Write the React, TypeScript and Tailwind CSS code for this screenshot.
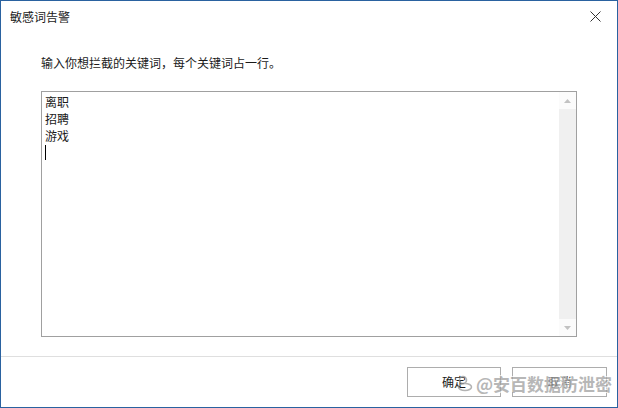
import React from "react";

const font = { fontFamily: '"Microsoft YaHei", "Noto Sans CJK SC", "Noto Sans", sans-serif' };

export default function App() {
  const words = ["离职", "招聘", "游戏"];

  return (
    <div
      className="relative w-[618px] h-[408px] bg-white border border-[#2a62a0] flex flex-col text-[12px] text-[#1a1a1a] overflow-hidden"
      style={font}
    >
      {/* title bar */}
      <div className="h-[31px] flex items-center justify-between pl-[9px] pr-[16px]">
        <span className="leading-none">敏感词告警</span>
        <svg width="11" height="11" viewBox="0 0 11 11" className="text-[#333]">
          <path d="M0.5 0.5 L10.5 10.5 M10.5 0.5 L0.5 10.5" stroke="currentColor" strokeWidth="1" />
        </svg>
      </div>

      <div className="flex-1 flex flex-col pl-[40px] pr-[40px]">
        <p className="mt-[25px] leading-none">输入你想拦截的关键词，每个关键词占一行。</p>

        {/* textarea */}
        <div className="mt-[22px] h-[246px] border border-[#a0a0a0] flex">
          <div className="flex-1 pl-[3px] pt-[1px] leading-[17px]">
            {words.map((w) => (
              <div key={w}>{w}</div>
            ))}
            <div className="h-[17px] flex items-center">
              <span className="block w-px h-[15px] bg-black" />
            </div>
          </div>
          <div className="w-[17px] bg-[#f0f0f0] flex flex-col justify-between">
            <div className="h-[17px] bg-[#fbfbfb] flex items-center justify-center">
              <svg width="7" height="4" viewBox="0 0 7 4">
                <path d="M0 4 L3.5 0 L7 4 Z" fill="#c2c2c2" />
              </svg>
            </div>
            <div className="h-[17px] bg-[#fbfbfb] flex items-center justify-center">
              <svg width="7" height="4" viewBox="0 0 7 4">
                <path d="M0 0 L3.5 4 L7 0 Z" fill="#c2c2c2" />
              </svg>
            </div>
          </div>
        </div>
      </div>

      {/* footer */}
      <div className="h-[51px] border-t border-[#dfdfdf] flex justify-end items-start gap-[11px] pt-[10px] pr-[10px]">
        <button className="w-[94px] h-[30px] border border-[#adadad] bg-white leading-none">确定</button>
        <button className="w-[95px] h-[30px] border border-[#adadad] bg-white leading-none">取消</button>
      </div>

      {/* watermark */}
      <div className="absolute left-[455px] top-[373px] flex items-center gap-[2px] text-[17px] font-bold text-[#a0a0a0] opacity-75 leading-none [text-shadow:1px_1px_0_#fff,-1px_-1px_0_#fff]">
        <svg width="18" height="18" viewBox="0 0 18 18">
          <circle cx="7" cy="6" r="3.5" fill="none" stroke="#9a9a9a" strokeWidth="1.6" />
          <ellipse cx="9" cy="13" rx="6.5" ry="3.5" fill="none" stroke="#9a9a9a" strokeWidth="1.6" />
        </svg>
        <span>@安百数据防泄密</span>
      </div>
    </div>
  );
}
